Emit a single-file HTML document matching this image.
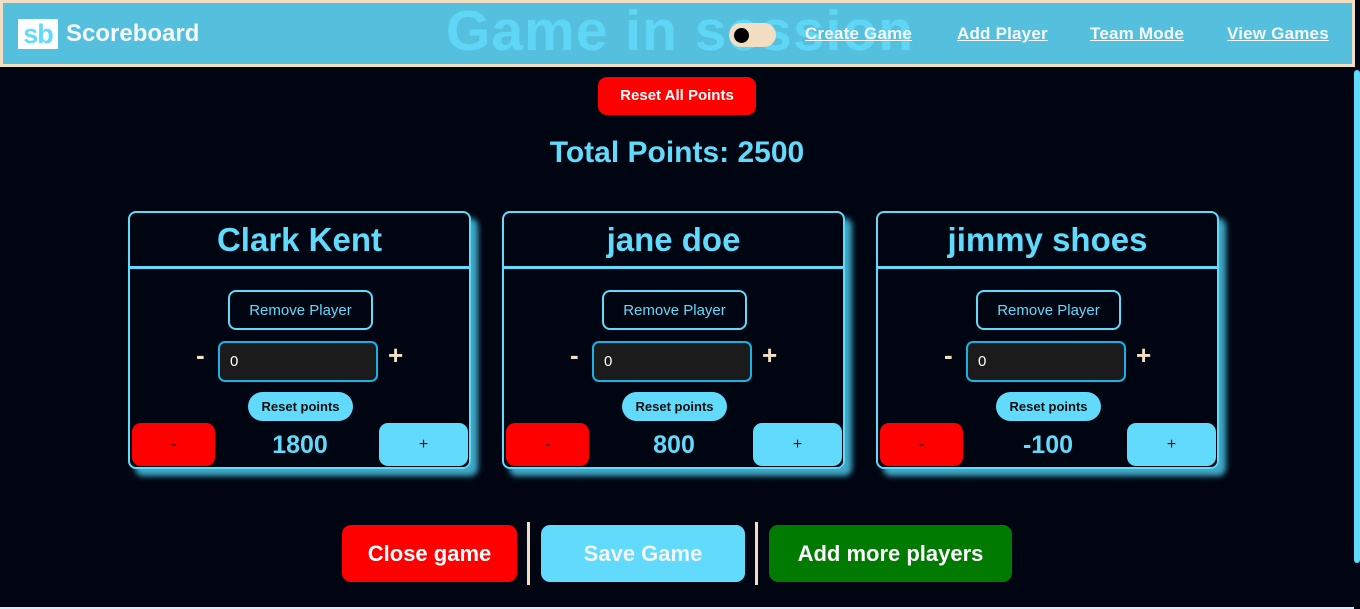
<!DOCTYPE html>
<html><head><style>
*{box-sizing:border-box;margin:0;padding:0}
body{width:1360px;height:609px;background:#000512;overflow:hidden;position:relative;font-family:"Liberation Sans",sans-serif}
.a{position:absolute}
.hdr{left:0;top:0;width:1355px;height:67px;background:#55c0dd;border:3px solid #f2dfc3}
.nav{font-weight:bold;color:#f4f8fb;text-decoration:underline;font-size:17px;top:24px;letter-spacing:0.2px}
.card{width:343px;height:258px;top:211px;border:2px solid #61dafb;border-radius:8px;box-shadow:7px 7px 6px #3fa9c7}
.card .t{position:absolute;left:0;right:0;top:0;text-align:center;color:#61dafb;font-size:33px;font-weight:bold;height:56px;line-height:53px;border-bottom:3px solid #61dafb}
.rm{position:absolute;left:98px;top:77px;width:145px;height:40px;border:2px solid #61dafb;border-radius:8px;color:#61dafb;font-size:15px;text-align:center;line-height:38px}
.inp{position:absolute;left:88px;top:128px;width:160px;height:41px;border:2px solid #1ab2e6;border-radius:7px;background:#1b1b1b;color:#fff;font-size:15px;padding-left:10px;line-height:37px}
.pm{position:absolute;color:#f2dfc3;font-size:26px;font-weight:bold;top:127px}
.rp{position:absolute;left:118px;top:179px;width:105px;height:29px;border-radius:15px;background:#61dafb;color:#111;font-size:13px;font-weight:bold;text-align:center;line-height:29px}
.bm{position:absolute;left:2px;top:210px;width:83px;height:43px;border-radius:9px;background:#f00;color:#111;font-size:16px;text-align:center;line-height:43px}
.bp{position:absolute;left:249px;top:210px;width:89px;height:43px;border-radius:9px;background:#61dafb;color:#111;font-size:16px;text-align:center;line-height:43px}
.sc{position:absolute;left:90px;width:160px;top:218px;text-align:center;color:#61dafb;font-size:25px;font-weight:bold}
.bb{top:525px;height:57px;border-radius:9px;color:#fff;font-size:22px;font-weight:bold;text-align:center;line-height:57px}
.sep{top:522px;width:3px;height:63px;background:#f2dfc3}
</style></head><body>
<div class="a hdr"></div>
<div class="a" style="left:18px;top:19px;width:40px;height:30px;background:#fff;color:#61dafb;font-weight:bold;font-size:27px;line-height:30px;text-align:center;letter-spacing:-1px">sb</div>
<div class="a" style="left:66px;top:20px;color:#f4f8fb;font-size:24px;font-weight:bold">Scoreboard</div>
<div class="a" style="left:446px;top:-2px;color:#61dafb;font-size:57px;font-weight:bold;opacity:.85;letter-spacing:1px">Game in session</div>
<div class="a" style="left:729px;top:23px;width:47px;height:24px;border-radius:12px;background:#f2dfc3"></div>
<div class="a" style="left:734px;top:28px;width:15px;height:15px;border-radius:50%;background:#000"></div>
<div class="a nav" style="left:805px">Create Game</div>
<div class="a nav" style="left:957px">Add Player</div>
<div class="a nav" style="left:1090px">Team Mode</div>
<div class="a nav" style="left:1227px">View Games</div>
<div class="a" style="left:1354px;top:70px;width:6px;height:493px;border-radius:3px;background:#61dafb"></div>
<div class="a" style="left:598px;top:77px;width:158px;height:38px;border-radius:9px;background:#f00;color:#fff;font-weight:bold;font-size:15px;text-align:center;line-height:38px">Reset All Points</div>
<div class="a" style="left:0;width:1354px;top:136px;text-align:center;color:#61dafb;font-size:30px;font-weight:bold">Total Points: 2500</div>

<div class="a card" style="left:128px"><div class="t">Clark Kent</div><div class="rm">Remove Player</div><div class="pm" style="left:66px">-</div><div class="inp">0</div><div class="pm" style="left:258px">+</div><div class="rp">Reset points</div><div class="bm">-</div><div class="sc">1800</div><div class="bp">+</div></div>
<div class="a card" style="left:502px"><div class="t">jane doe</div><div class="rm">Remove Player</div><div class="pm" style="left:66px">-</div><div class="inp">0</div><div class="pm" style="left:258px">+</div><div class="rp">Reset points</div><div class="bm">-</div><div class="sc">800</div><div class="bp">+</div></div>
<div class="a card" style="left:876px"><div class="t">jimmy shoes</div><div class="rm">Remove Player</div><div class="pm" style="left:66px">-</div><div class="inp">0</div><div class="pm" style="left:258px">+</div><div class="rp">Reset points</div><div class="bm">-</div><div class="sc">-100</div><div class="bp">+</div></div>

<div class="a bb" style="left:342px;width:175px;background:#f00">Close game</div>
<div class="a sep" style="left:527px"></div>
<div class="a bb" style="left:541px;width:204px;background:#61dafb;color:#f0f6fb">Save Game</div>
<div class="a sep" style="left:755px"></div>
<div class="a bb" style="left:769px;width:243px;background:#007a00">Add more players</div>
<div class="a" style="left:0;top:607px;width:1354px;height:2px;background:#cfeef5"></div>
</body></html>
